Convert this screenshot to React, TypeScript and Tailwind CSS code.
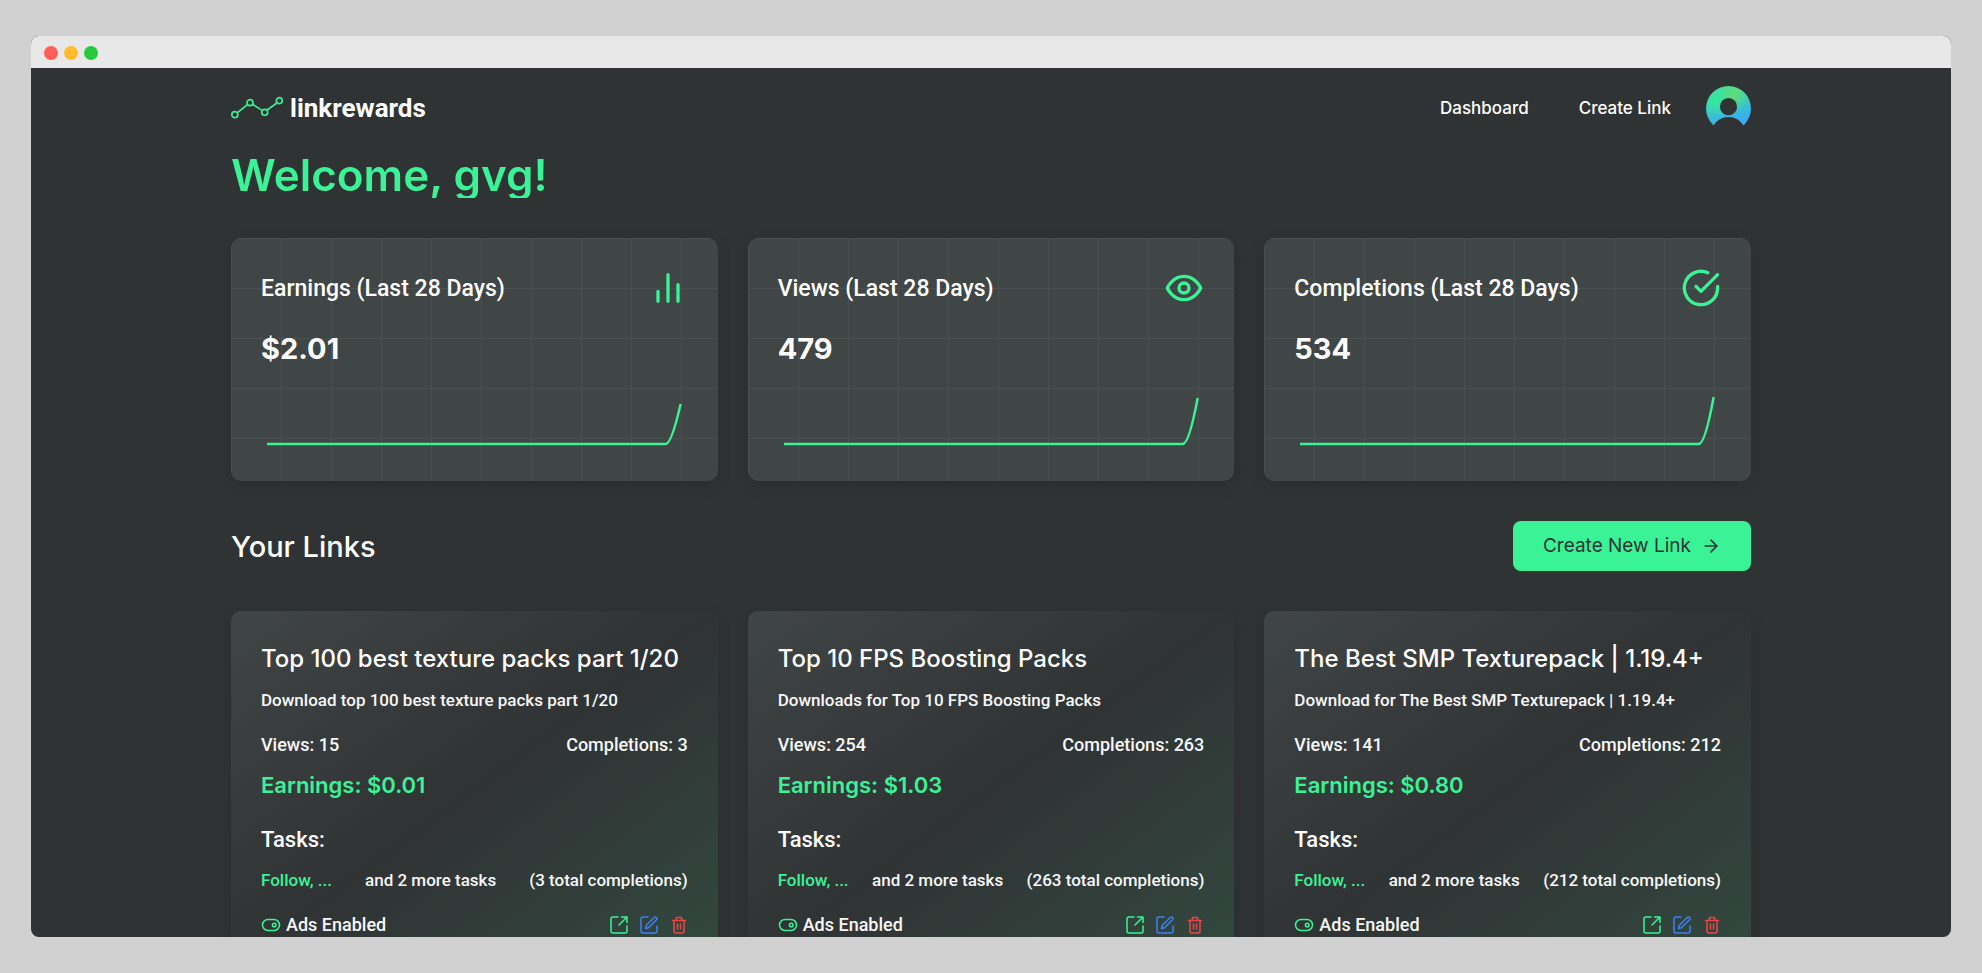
import React from 'react';
import { ArrowRight } from 'lucide-react';

type IconProps = { className?: string };

function BarsIcon({ className }: IconProps) {
  return (
    <svg viewBox="0 0 24 24" className={className} fill="none" stroke="currentColor" strokeWidth="2" strokeLinecap="round" aria-hidden="true">
      <path d="M18 20V10M12 20V4M6 20v-6" />
    </svg>
  );
}

function EyeIcon({ className }: IconProps) {
  return (
    <svg viewBox="0 0 24 24" className={className} fill="none" stroke="currentColor" strokeWidth="2" strokeLinecap="round" strokeLinejoin="round" aria-hidden="true">
      <path d="M2 12s3-7 10-7 10 7 10 7-3 7-10 7-10-7-10-7Z" />
      <circle cx="12" cy="12" r="3" />
    </svg>
  );
}

function CheckIcon({ className }: IconProps) {
  return (
    <svg viewBox="0 0 24 24" className={className} fill="none" stroke="currentColor" strokeWidth="2" strokeLinecap="round" strokeLinejoin="round" aria-hidden="true">
      <path d="M22 11.08V12a10 10 0 1 1-5.93-9.14" />
      <path d="m9 11 3 3L22 4" />
    </svg>
  );
}

function LogoMark() {
  return (
    <svg viewBox="0 0 52 24" className="h-6 w-[52px] text-[#38ec94]" fill="none" stroke="currentColor" strokeWidth="1.7" aria-hidden="true">
      <circle cx="3.8" cy="18.7" r="3" />
      <circle cx="19" cy="6.7" r="3" />
      <circle cx="33.7" cy="16.3" r="3" />
      <circle cx="48.3" cy="4.7" r="3" />
      <path d="M6.1 16.9 16.7 8.5M21.3 8.3 31.4 14.6M35.8 14.3 46.2 6.7" />
    </svg>
  );
}

function Avatar() {
  return (
    <svg viewBox="0 0 45 45" className="size-[45px]" aria-hidden="true">
      <defs>
        <linearGradient id="av-base" x1="0.4" y1="0.1" x2="0.6" y2="0.8">
          <stop offset="0" stopColor="#36e0a4" />
          <stop offset="1" stopColor="#3aaef0" />
        </linearGradient>
        <radialGradient id="av-left" cx="0.22" cy="0.33" r="0.35">
          <stop offset="0" stopColor="#37e89e" />
          <stop offset="1" stopColor="#37e89e" stopOpacity="0" />
        </radialGradient>
        <radialGradient id="av-top" cx="0.62" cy="0.18" r="0.38">
          <stop offset="0" stopColor="#62dc74" />
          <stop offset="1" stopColor="#62dc74" stopOpacity="0" />
        </radialGradient>
        <mask id="av-mask">
          <circle cx="22.5" cy="22.5" r="22.5" fill="#fff" />
          <circle cx="22.5" cy="20.7" r="8.6" fill="#000" />
          <circle cx="22.5" cy="48.2" r="17.2" fill="#000" />
        </mask>
      </defs>
      <g mask="url(#av-mask)">
        <rect width="45" height="45" fill="url(#av-base)" />
        <rect width="45" height="45" fill="url(#av-left)" />
        <rect width="45" height="45" fill="url(#av-top)" />
      </g>
    </svg>
  );
}

function AdsIcon() {
  return (
    <svg viewBox="0 0 20 20" className="size-5 text-[#3af396]" fill="none" stroke="currentColor" strokeWidth="1.5" aria-hidden="true">
      <rect x="1.5" y="4.5" width="17" height="11" rx="5.5" />
      <circle cx="13.2" cy="10" r="1.8" />
    </svg>
  );
}

function OpenIcon() {
  return (
    <svg viewBox="0 0 18 18" className="size-[18px]" fill="none" stroke="currentColor" strokeWidth="1.5" strokeLinecap="round" strokeLinejoin="round" aria-hidden="true">
      <path d="M8 1H3a2 2 0 0 0-2 2v12a2 2 0 0 0 2 2h12a2 2 0 0 0 2-2V10" />
      <path d="M11.5 1H17v5.5M17 1 9 9" />
    </svg>
  );
}

function EditIcon() {
  return (
    <svg viewBox="0 0 18 18" className="size-[18px]" fill="none" stroke="currentColor" strokeWidth="1.5" strokeLinecap="round" strokeLinejoin="round" aria-hidden="true">
      <path d="M8 1H3a2 2 0 0 0-2 2v12a2 2 0 0 0 2 2h12a2 2 0 0 0 2-2V10" />
      <path d="M5.5 12.5 6.2 9.5 14.2 1.5a1.4 1.4 0 0 1 2.3 2.3L8.5 11.8Z" />
    </svg>
  );
}

function TrashIcon() {
  return (
    <svg viewBox="0 0 18 18" className="size-[18px]" fill="none" stroke="currentColor" strokeWidth="1.5" strokeLinecap="round" strokeLinejoin="round" aria-hidden="true">
      <path d="M2.5 4.5h13M6 4.5 6.6 1.5h4.8l.6 3M4 4.5v10.5a2 2 0 0 0 2 2h6a2 2 0 0 0 2-2V4.5M7.5 8v5M10.5 8v5" />
    </svg>
  );
}

const stats = [
  { label: 'Earnings (Last 28 Days)', value: '$2.01', Icon: BarsIcon, peak: 34 },
  { label: 'Views (Last 28 Days)', value: '479', Icon: EyeIcon, peak: 28 },
  { label: 'Completions (Last 28 Days)', value: '534', Icon: CheckIcon, peak: 27 },
];

const links = [
  {
    title: 'Top 100 best texture packs part 1/20',
    description: 'Download top 100 best texture packs part 1/20',
    views: 15,
    completions: 3,
    earnings: '$0.01',
  },
  {
    title: 'Top 10 FPS Boosting Packs',
    description: 'Downloads for Top 10 FPS Boosting Packs',
    views: 254,
    completions: 263,
    earnings: '$1.03',
  },
  {
    title: 'The Best SMP Texturepack | 1.19.4+',
    description: 'Download for The Best SMP Texturepack | 1.19.4+',
    views: 141,
    completions: 212,
    earnings: '$0.80',
  },
];

function StatCard({ label, value, Icon, peak }: (typeof stats)[number]) {
  return (
    <article className="rounded-[10px] bg-[#404545] bg-[linear-gradient(to_right,#4a4f4f_1px,transparent_1px),linear-gradient(to_bottom,#4a4f4f_1px,transparent_1px)] bg-size-[50px_50px] p-[30px] shadow-[0_5px_15px_rgba(0,0,0,0.12)]">
      <div className="flex h-10 items-center justify-between">
        <h2 className="pt-0.5 font-[Roboto,sans-serif] text-[23px] font-medium">{label}</h2>
        <Icon className="size-10 text-[#3af396]" />
      </div>
      <p className="mt-5 text-[29px] leading-[42px] font-bold">{value}</p>
      <svg viewBox="0 0 427 81" preserveAspectRatio="none" className="h-[81px] w-full text-[#3af396]" fill="none" stroke="currentColor" strokeWidth="2.5" aria-hidden="true">
        <path d={`M6 74H405C409 74 414 60 420 ${peak}`} vectorEffect="non-scaling-stroke" />
      </svg>
    </article>
  );
}

function LinkCard({ title, description, views, completions, earnings }: (typeof links)[number]) {
  return (
    <article className="rounded-[10px] bg-linear-to-br from-[#404545] via-[#303334] to-[#31493f] p-[30px] text-[#f7f7f7] shadow-[0_5px_15px_rgba(0,0,0,0.12)]">
      <h3 className="truncate font-[Inter,sans-serif] text-2xl leading-9 font-medium text-white">{title}</h3>
      <p className="mt-2 truncate text-[17px] leading-[30px]">{description}</p>
      <div className="mt-[15px] flex justify-between">
        <span>Views: {views}</span>
        <span>Completions: {completions}</span>
      </div>
      <p className="mt-[10px] font-[Inter,sans-serif] text-[22px] leading-[30px] font-semibold text-[#3af396]">Earnings: {earnings}</p>
      <h4 className="mt-[25px] text-[22px] leading-[30px] text-white">Tasks:</h4>
      <div className="mt-[10px] flex justify-between text-[17px] leading-[30px]">
        <span className="text-[#3af396]">Follow, ...</span>
        <span>and 2 more tasks</span>
        <span>({completions} total completions)</span>
      </div>
      <div className="mt-[15px] flex items-center justify-between">
        <span className="flex items-center gap-[5px]">
          <AdsIcon />
          Ads Enabled
        </span>
        <div className="flex items-center gap-3">
          <button type="button" aria-label="Open link" className="text-[#3af396]">
            <OpenIcon />
          </button>
          <button type="button" aria-label="Edit link" className="text-[#3b82f6]">
            <EditIcon />
          </button>
          <button type="button" aria-label="Delete link" className="text-[#ef4444]">
            <TrashIcon />
          </button>
        </div>
      </div>
    </article>
  );
}

export default function App() {
  return (
    <div className="h-screen bg-[#d1d1d1] px-[31px] py-9 font-[Inter,sans-serif] text-white">
      <div className="flex h-full flex-col overflow-hidden rounded-lg bg-[#303334]">
        {/* window bar */}
        <div className="flex h-8 shrink-0 items-center gap-1.5 bg-[#e8e8e8] px-[13px] pt-0.5">
          <span className="size-3.5 rounded-full bg-[#ff5f57]" />
          <span className="size-3.5 rounded-full bg-[#febc2e]" />
          <span className="size-3.5 rounded-full bg-[#28c840]" />
        </div>

        <div className="min-h-0 flex-1 overflow-hidden">
          <div className="mx-auto max-w-[1520px]">
            <header className="flex h-20 items-center justify-between">
              <a href="#" className="flex items-center gap-[7px] font-[Roboto,sans-serif] text-[26px] font-bold">
                <LogoMark />
                linkrewards
              </a>
              <nav className="flex items-center text-[17px] font-medium">
                <a href="#" className="mr-[50px] pt-0.5">Dashboard</a>
                <a href="#" className="mr-[35px] pt-0.5">Create Link</a>
                <button type="button" aria-label="Account">
                  <Avatar />
                </button>
              </nav>
            </header>

            <main>
              {/* painted through the text, so the descenders end with the box */}
              <h1 className="mt-1 bg-[#3af396] bg-clip-text text-[44px] leading-[46px] font-semibold text-transparent">
                Welcome, gvg!
              </h1>

              <section className="mt-10 grid grid-cols-3 gap-[30px]">
                {stats.map((s) => (
                  <StatCard key={s.label} {...s} />
                ))}
              </section>

              <div className="mt-10 flex items-center justify-between">
                <h2 className="pt-0.5 text-[29px] font-medium">Your Links</h2>
                <button
                  type="button"
                  className="flex h-[50px] items-center gap-[10px] rounded-lg bg-[#3af396] px-[30px] text-[19px] text-[#303334]"
                >
                  Create New Link
                  <ArrowRight size={20} />
                </button>
              </div>

              <section className="mt-10 grid grid-cols-3 gap-[30px] font-[Roboto,sans-serif] text-lg leading-[30px] font-medium">
                {links.map((l) => (
                  <LinkCard key={l.title} {...l} />
                ))}
              </section>
            </main>
          </div>
        </div>
      </div>
    </div>
  );
}
